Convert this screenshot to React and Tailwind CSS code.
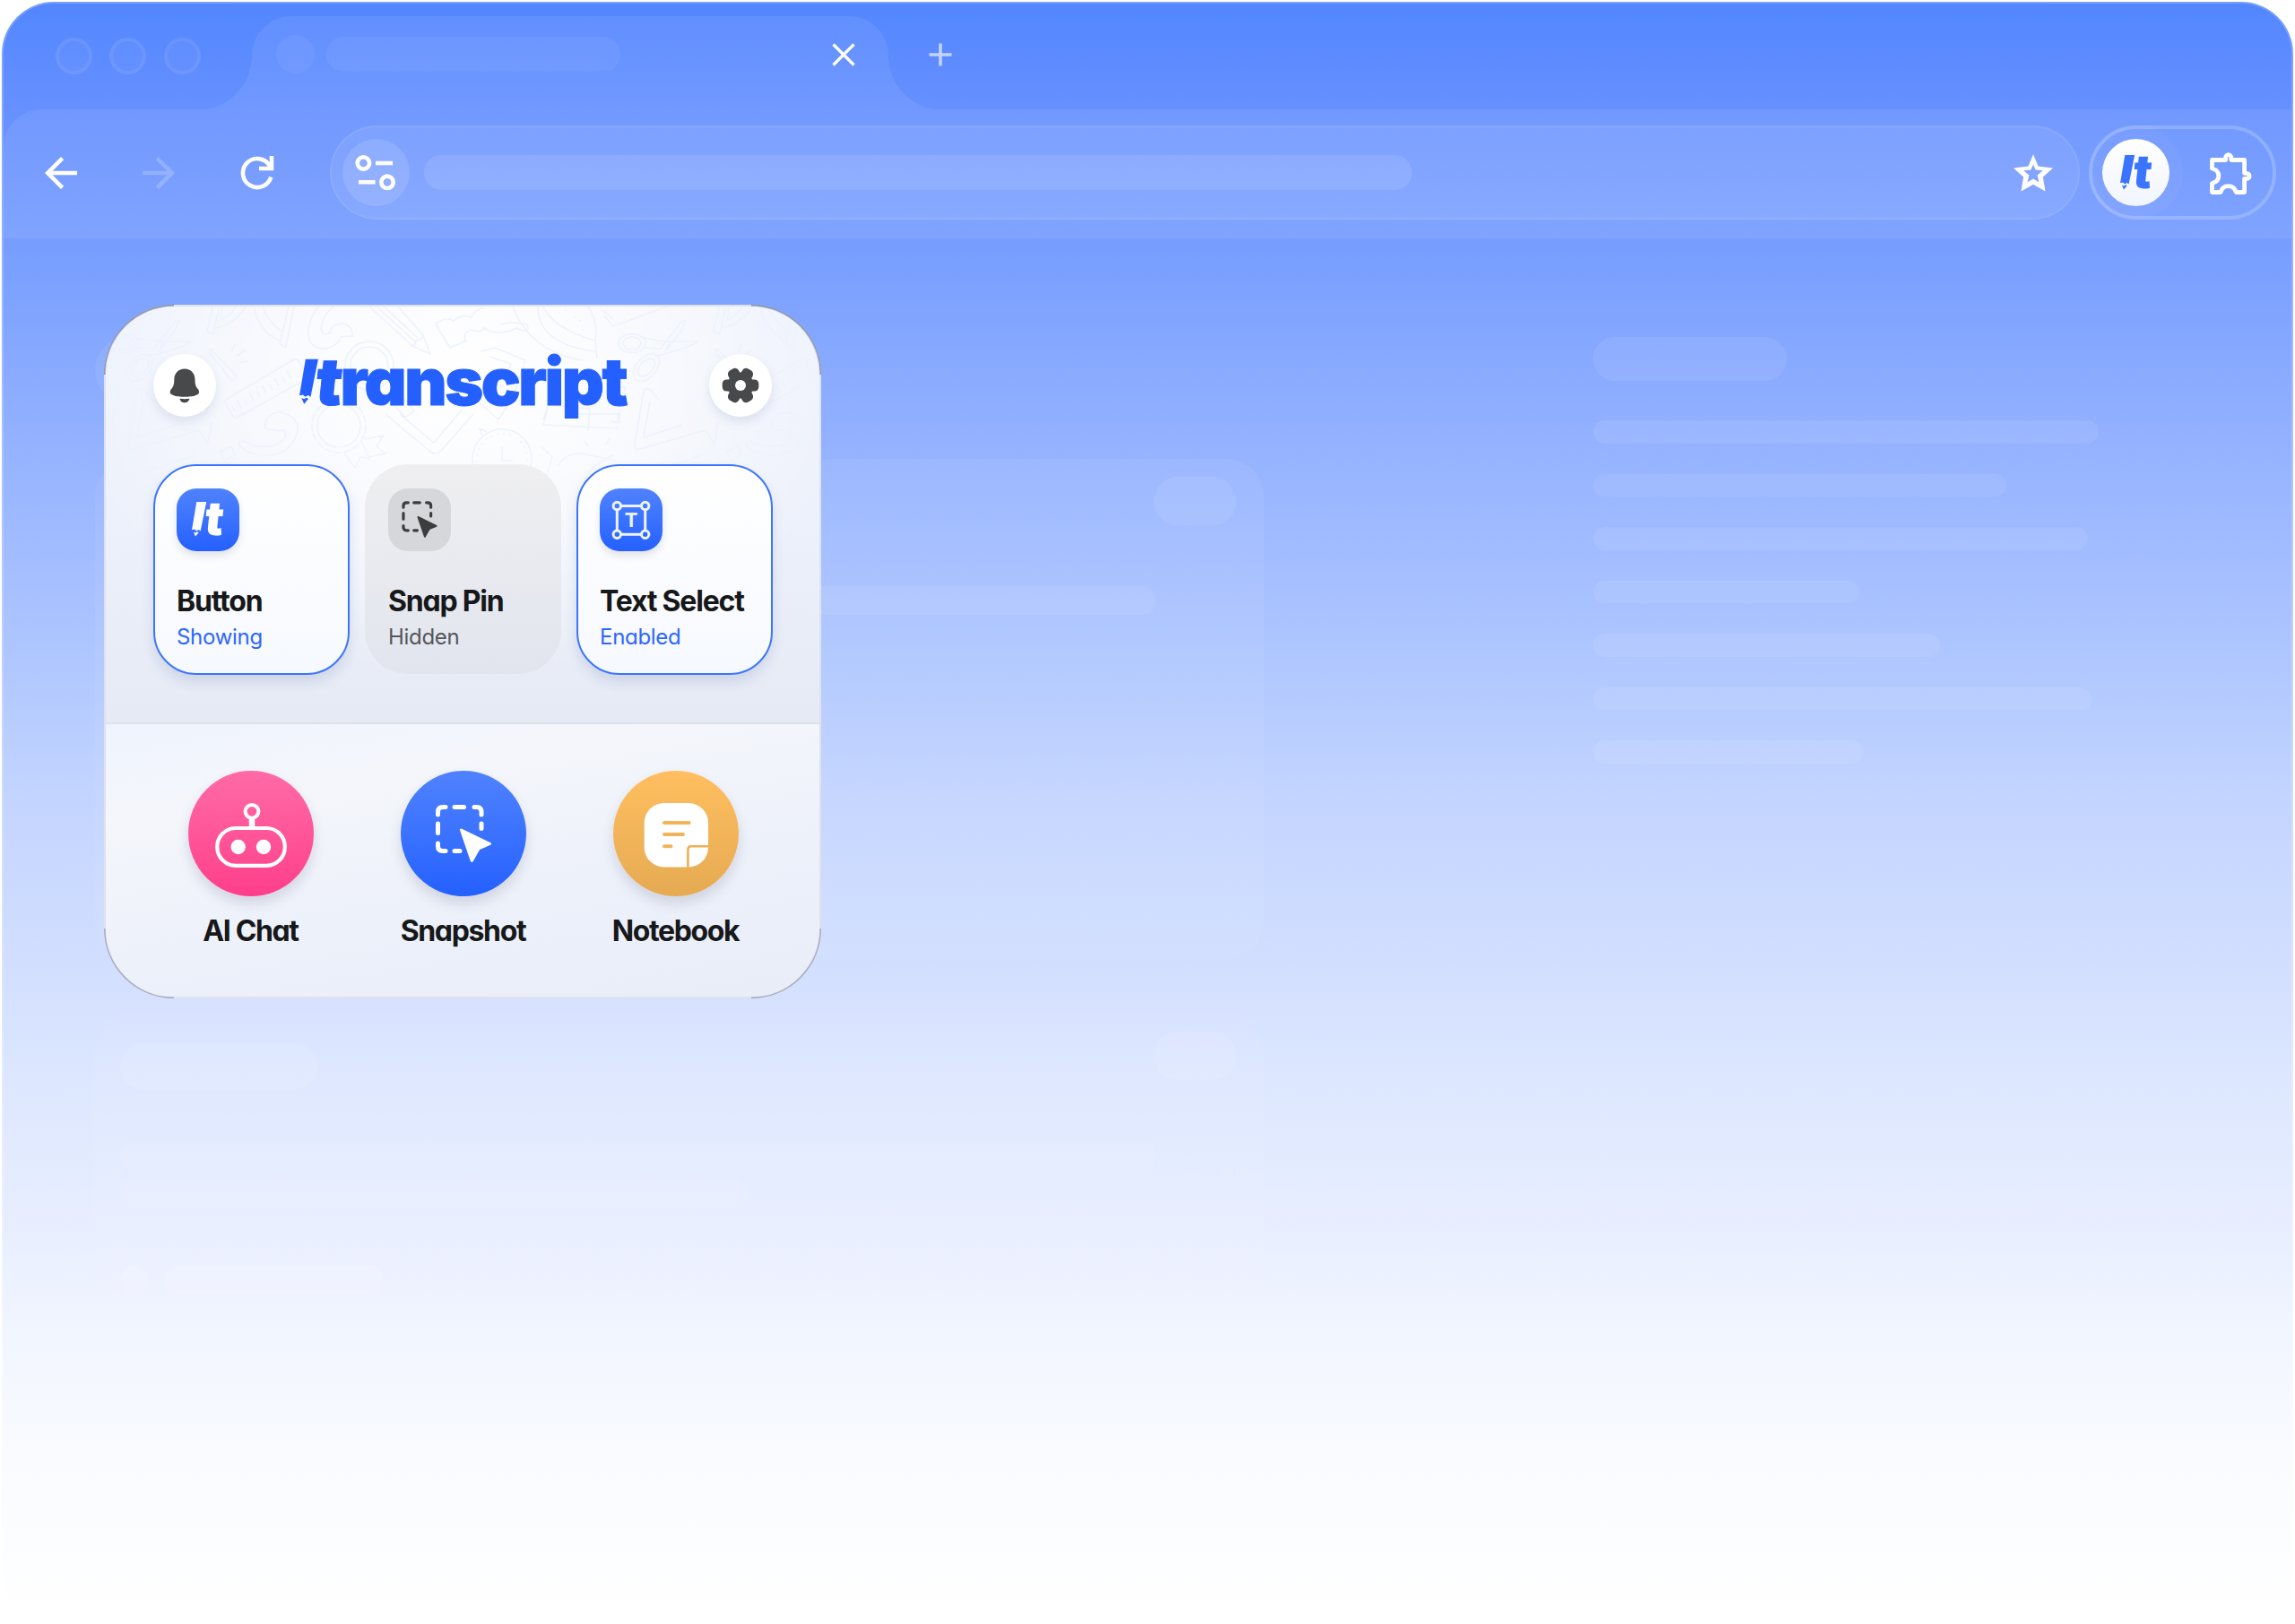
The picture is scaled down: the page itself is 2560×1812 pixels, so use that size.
import React from "react";
import { MdArrowBack, MdArrowForward } from "react-icons/md";

const ink = "font-['Inter','Liberation_Sans',sans-serif] [font-feature-settings:'cv11']";

function PencilSlash({ className }) {
  return (
    <svg viewBox="0 0 17 38.5" className={className} fill="currentColor">
      <path d="M5.3 0H16.2L9.6 32.6L7.6 31L5 32.4L3 30.6L0 31.3Z" />
      <path d="M1.8 33.4L4 34.4L6 33.2L7.8 34L4 38.5Z" />
    </svg>
  );
}

function BrandMark({ className = "" }) {
  return (
    <span className={`flex h-[38.5px] items-start ${className}`}>
      <PencilSlash className="h-[38.5px] w-[17px]" />
      <span className={`${ink} -ml-[2px] -mt-[6px] inline-block -skew-x-6 text-[52px] font-black leading-[50px]`}>t</span>
    </span>
  );
}

function SnapIcon({ className }) {
  return (
    <svg viewBox="484 898 66 68" className={className} fill="none" stroke="currentColor" strokeWidth="5" strokeLinecap="round">
      <path d="M488.5 911V908Q488.5 902.5 494 902.5H497M507 902.5H517.5M529 902.5H531.5Q537 902.5 537 908V911M488.5 921V931.5M488.5 943V946Q488.5 951.5 494 951.5H497M507 951.5H513M537 921V926.5" />
      <path d="M514.5 928L546.5 943.5L534 949L526.3 962.5Z" fill="currentColor" strokeWidth="3" strokeLinejoin="round" />
    </svg>
  );
}

function RobotIcon() {
  return (
    <svg viewBox="210 858 140 140" className="size-[140px] shrink-0" fill="none" stroke="white">
      <circle cx="281" cy="903.3" r="7.4" strokeWidth="4" />
      <path d="M281 911V921" strokeWidth="6.5" />
      <rect x="242.3" y="922" width="75.5" height="41.8" rx="20.5" strokeWidth="4.2" />
      <circle cx="265.7" cy="943" r="8.2" fill="white" stroke="none" />
      <circle cx="294" cy="943" r="8.2" fill="white" stroke="none" />
    </svg>
  );
}

function NoteIcon() {
  return (
    <svg viewBox="684 858 140 140" className="size-[140px] shrink-0" fill="none">
      <rect x="718.7" y="894" width="71.3" height="71.5" rx="22" fill="white" />
      <path d="M741 916H768.5M741 929H762M741 942.3H748.5" stroke="#f2b359" strokeWidth="4" strokeLinecap="round" />
      <path d="M790.5 942.3H771Q767.4 942.3 767.4 946V966" stroke="#eeb057" strokeWidth="2.6" />
    </svg>
  );
}

function TextSelectIcon() {
  return (
    <svg viewBox="669 544.5 70 70" className="size-[70px]" fill="none" stroke="#eef3ff" strokeWidth="3">
      <path d="M693 564H715M693 595.7H715M688.3 569V591M719.7 569V591" />
      <circle cx="688.3" cy="564" r="4.2" />
      <circle cx="719.7" cy="564" r="4.2" />
      <circle cx="688.3" cy="595.7" r="4.2" />
      <circle cx="719.7" cy="595.7" r="4.2" />
      <text x="704" y="587.8" textAnchor="middle" fontFamily="Inter" fontWeight="700" fontSize="22" fill="#eef3ff" stroke="none">T</text>
    </svg>
  );
}

function BellIcon() {
  return (
    <svg viewBox="170.5 395.5 70 70" className="size-[70px]" fill="#48494b">
      <path d="M205.4 412C212.5 412 217 417 217 424C217 430 218.3 432.5 220.5 434.8Q222.3 437 221.5 439C219.5 442.3 212.5 443.3 205.4 443.3S191.3 442.3 189.3 439Q188.5 437 190.3 434.8C192.5 432.5 193.8 430 193.8 424C193.8 417 198.3 412 205.4 412Z" />
      <path d="M199.8 445.3Q205.4 446.2 211 445.3Q209.6 449.8 205.4 449.8T199.8 445.3Z" />
    </svg>
  );
}

function GearIcon() {
  return (
    <svg viewBox="-35 -35 70 70" className="size-[70px]" fill="#48494b">
      <circle r="14.6" />
      <rect x="-20.3" y="-6.6" width="40.6" height="13.2" rx="4.8" />
      <rect x="-20.3" y="-6.6" width="40.6" height="13.2" rx="4.8" transform="rotate(60)" />
      <rect x="-20.3" y="-6.6" width="40.6" height="13.2" rx="4.8" transform="rotate(120)" />
      <circle r="6" fill="white" />
    </svg>
  );
}

function TuneIcon() {
  return (
    <svg viewBox="382 155 75 75" className="size-[75px]" fill="none" stroke="white" strokeWidth="4.6">
      <circle cx="405.4" cy="182" r="6.7" />
      <path d="M419 182H438M400 203.3H418.6" />
      <circle cx="432" cy="203.3" r="6.7" />
    </svg>
  );
}

function StarIcon({ className }) {
  return (
    <svg viewBox="0 0 46 46" className={className} fill="white" fillRule="evenodd">
      <path d="M23 2.3L28.6 15.6L45 17.6L33.9 27.4L36.5 43.6L23 35.8L9.5 43.6L12.1 27.4L1 17.6L17.4 15.6ZM23 13.6L20.4 19.6L12.3 20.3L18.4 25.6L16.6 33.2L23 29.5L29.4 33.2L27.6 25.6L33.7 20.3L25.6 19.6Z" />
    </svg>
  );
}

function PuzzleIcon() {
  return (
    <svg viewBox="2462 166 52 52" className="size-[52px]" fill="none" stroke="white" strokeWidth="4.8" strokeLinejoin="round">
      <path d="M2467.5 177.5H2482.6V174.8a3.1 3.1 0 0 1 6.2 0V177.5H2503.6V192.3H2506a3.1 3.1 0 0 1 0 6.2H2503.6V213.5H2494.2C2493 209 2490 206.6 2485.6 206.6S2478.2 209 2477 213.5H2467.5V203.5C2472 202.6 2474.8 199.6 2474.8 195.3S2472 188 2467.5 187Z" />
    </svg>
  );
}

function Doodles() {
  return (
    <svg viewBox="118 342 796 290" className="absolute left-0 top-0 h-[290px] w-[796px]" fill="none" stroke="#edf2fd" strokeWidth="1.6" strokeLinejoin="round">
      <defs>
        <linearGradient id="fadeDown" x1="0" y1="0" x2="0" y2="1">
          <stop offset="0.5" stopColor="white" />
          <stop offset="1" stopColor="black" />
        </linearGradient>
        <mask id="doodleMask" maskUnits="userSpaceOnUse" x="118" y="342" width="796" height="290">
          <rect x="118" y="342" width="796" height="290" fill="url(#fadeDown)" />
        </mask>
        <g id="doodleTile">
          <ellipse cx="140" cy="383" rx="15" ry="10.5" />
          <ellipse cx="140" cy="383" rx="10" ry="7" />
          <ellipse cx="156" cy="410" rx="18" ry="11" transform="rotate(-48 156 410)" />
          <ellipse cx="156" cy="410" rx="12" ry="7" transform="rotate(-48 156 410)" />
          <path d="M154 388L172 389L196 358L200 357L194 371L178 391M178 391L182 381L213 381Q207 387 165 398M150 376L168 380L182 381" />
          <path d="M237 342L231 370L238 373L244 344M240 366Q262 362 274 342M248 342L246 357Q258 352 263 342M283 343Q290 372 314 381M293 342Q300 362 316 370M322 342L312 384L319 387L328 342" />
          <path d="M345 362Q340 388 360 389Q376 388 380 376L393 375Q394 362 380 361Q370 362 368 371Q360 376 358 366Q360 352 372 342M345 362Q348 350 356 342" />
          <path d="M412 342L460 386L480 395L472 374L444 342M420 342L464 382M428 342L466 377M460 386Q464 384 464 380Q470 380 472 374" />
          <circle cx="412" cy="408" r="27" />
          <circle cx="412" cy="408" r="21" />
          <path d="M250 447L328 401Q332 400 334 404L342 418Q343 422 340 424L264 466Q261 467 259 463ZM262 459L259 453M269 455L264 446M276 451L273 445M283 447L278 438M290 443L287 437M297 439L292 430M304 435L301 429M311 431L306 422M318 427L315 421M325 423L320 414" />
          <path d="M235 389Q232 390 234 394L258 424Q262 424 264 420ZM233 394L247 410M258 392L262 384M264 397L274 390M267 404L276 403" />
          <path d="M153 436Q156 432 160 435L170 446M143 496Q142 503 149 501L222 480L232 496L236 470M153 436L143 496M160 448L153 488L196 474" />
          <path d="M246 504L258 498L262 508L250 514ZM268 498Q264 492 272 492Q290 502 308 496Q324 488 316 480Q308 482 296 478Q294 462 312 460Q334 464 332 482Q324 508 296 508Q278 508 268 498" />
          <circle cx="378" cy="475" r="24" />
          <circle cx="378" cy="475" r="30" strokeDasharray="9 2" />
          <path d="M384 506L396 522L402 510L412 512L404 494M406 490L428 486L420 498L430 506L412 510" />
          <path d="M430 462L480 504Q486 508 492 503L528 462M446 462L484 494L516 456M440 452L452 446L462 458L452 466Z" />
          <path d="M486 362Q496 352 506 358Q514 350 526 354Q528 346 540 343M486 362L502 388L520 380Q514 372 526 368Q536 372 540 366Q556 376 576 366Q592 374 588 362Q570 358 558 362" />
          <path d="M536 392L552 388L586 402L572 444L556 468L524 440M546 398L570 406L566 418L548 412M540 424L562 432" />
          <circle cx="560" cy="512" r="33" />
          <circle cx="560" cy="512" r="28" strokeDasharray="2 5" />
          <path d="M538 486L535 478L543 482M560 514V498M560 514H572" />
          <path d="M572 342Q590 392 650 402M600 342Q600 384 664 392M606 342Q616 366 664 380Q668 360 656 342M664 380L666 400M630 346h2M640 354h2M650 368h2M646 358h2" />
          <path d="M674 352L684 364L744 342M672 346L684 356" />
          <path d="M606 468L612 452L658 456L656 480M612 452L606 474L690 478M640 462H690L688 472" />
          <path d="M604 498L616 510L610 530M622 520Q636 500 658 508L688 514M650 540Q656 520 684 508M656 498L652 492M676 496L680 488" />
          <path d="M150 530L218 508M160 545L230 520M116 432H132V442M116 470L126 472V458" />
        </g>
      </defs>
      <g mask="url(#doodleMask)">
        <use href="#doodleTile" />
        <use href="#doodleTile" x="565" />
      </g>
    </svg>
  );
}

function ToggleCard({ icon, title, status, on }) {
  return (
    <div
      className={
        on
          ? "h-[235px] w-[219px] rounded-[48px] border-2 border-[#3b74ff] bg-linear-to-b from-white to-[#f6f9ff] pl-[24.5px] pt-[24.5px] shadow-[0_8px_14px_rgba(40,60,120,0.13)]"
          : "h-[234px] w-[219px] rounded-[48px] bg-linear-to-b from-[#efeff1] to-[#e2e5ee] pl-[26.5px] pt-[26.5px]"
      }
    >
      <div
        className={
          on
            ? "flex size-[70px] items-center justify-center rounded-[22px] bg-linear-to-b from-[#4f82ff] to-[#2460ff] text-white shadow-[0_5px_8px_rgba(40,40,60,0.12)]"
            : "flex size-[70px] items-center justify-center rounded-[22px] bg-[#d6d7da] text-[#3c3d3f]"
        }
      >
        {icon}
      </div>
      <div className={`${ink} mt-[36px] whitespace-nowrap text-[32px] font-bold leading-[40px] tracking-[-1.2px] text-[#17181a]`}>{title}</div>
      <div className={`${ink} mt-[4px] text-[24px] leading-[32px] tracking-[-0.3px] ${on ? "text-[#2d66ff]" : "text-[#55565a]"}`}>{status}</div>
    </div>
  );
}

function Action({ icon, label, tone }) {
  return (
    <div className="flex w-[219px] flex-col items-center">
      <div className={`flex size-[140px] items-center justify-center rounded-full text-white shadow-[0_8px_14px_rgba(60,60,100,0.16)] ${tone}`}>{icon}</div>
      <div className={`${ink} mt-[18.5px] whitespace-nowrap text-[32px] font-bold leading-[40px] tracking-[-1.35px] text-[#17181a]`}>{label}</div>
    </div>
  );
}

function Popup() {
  return (
    <div className="absolute left-[116px] top-[340px] h-[774px] w-[800px] overflow-hidden rounded-[78px] border-2 border-[#dfe2ec]">
      <section className="relative h-[466px] border-b-2 border-[#dde1ea] bg-[radial-gradient(ellipse_440px_330px_at_50%_18%,#ffffff_0%,rgba(255,255,255,0.75)_35%,rgba(255,255,255,0)_100%),linear-gradient(to_bottom,#eef2fc_0%,#edf1fb_50%,#e5eaf5_100%)]">
        <Doodles />
        <header className="relative flex h-[176px] items-start justify-between px-[52.5px] pt-[53px]">
          <div className="size-[70px] rounded-full bg-white shadow-[0_6px_12px_rgba(60,80,140,0.12)]">
            <BellIcon />
          </div>
          <h1 className="flex items-start text-[#2460ff]">
            <PencilSlash className="mt-[5px] h-[51.5px] w-[22px]" />
            <span className={`${ink} -ml-[3px] -mt-[13.5px] whitespace-nowrap text-[73px] font-black leading-[88px] tracking-[-2.4px] [-webkit-text-stroke:1px_#2460ff]`}>
              <span className="inline-block -skew-x-6">t</span>ranscript
            </span>
          </h1>
          <div className="size-[70px] rounded-full bg-white shadow-[0_6px_12px_rgba(60,80,140,0.12)]">
            <GearIcon />
          </div>
        </header>
        <div className="relative flex items-start gap-[17px] pl-[52.5px]">
          <ToggleCard on title="Button" status="Showing" icon={<BrandMark />} />
          <ToggleCard title="Snap Pin" status="Hidden" icon={<SnapIcon className="h-[43px] w-[42px]" />} />
          <ToggleCard on title="Text Select" status="Enabled" icon={<TextSelectIcon />} />
        </div>
      </section>
      <section className="flex h-[304px] items-start gap-[18px] bg-[linear-gradient(170deg,#eff4fe_0%,#f4f6fb_25%,#edf1fa_60%,#e9edf8_100%)] pl-[52px] pt-[52px]">
        <Action label="AI Chat" tone="bg-linear-to-b from-[#ff6aa6] to-[#ff3d8b]" icon={<RobotIcon />} />
        <Action label="Snapshot" tone="bg-linear-to-b from-[#5082ff] to-[#2460ff]" icon={<SnapIcon className="h-[68px] w-[66px]" />} />
        <Action label="Notebook" tone="bg-linear-to-b from-[#ffbf60] to-[#e5aa52]" icon={<NoteIcon />} />
      </section>
    </div>
  );
}

function PopupCorners() {
  return (
    <svg viewBox="0 0 800 774" className="absolute left-[116px] top-[340px] h-[774px] w-[800px]" fill="none" strokeWidth="1.4">
      <path d="M0.7 78A77.3 77.3 0 0 1 78 0.7M722 0.7A77.3 77.3 0 0 1 799.3 78" stroke="rgba(50,50,60,0.45)" />
      <path d="M0.7 696A77.3 77.3 0 0 0 78 773.3M722 773.3A77.3 77.3 0 0 0 799.3 696" stroke="rgba(50,50,60,0.32)" />
    </svg>
  );
}

function TabStrip() {
  return (
    <div className="flex h-[118px] items-end">
      <div className="flex h-full items-center gap-[19.5px] pb-px pl-[57.5px]">
        <span className="size-[41px] rounded-full border-4 border-white/6 bg-white/4" />
        <span className="size-[41px] rounded-full border-4 border-white/6 bg-white/4" />
        <span className="size-[41px] rounded-full border-4 border-white/6 bg-white/4" />
      </div>
      <svg viewBox="0 0 57 60" className="h-[60px] w-[57px] text-white/7" fill="currentColor">
        <path d="M57 0C57 33 30 60 0 60H57Z" />
      </svg>
      <div className="flex h-[104px] w-[710px] items-start rounded-t-[44px] bg-white/7 pl-[27px] pt-[21px]">
        <span className="size-[43px] rounded-full bg-white/5" />
        <span className="ml-[13px] mt-[2px] h-[39px] w-[328px] rounded-full bg-white/5" />
        <svg viewBox="0 0 26 26" className="ml-[236px] mt-[9px] size-[26px]" stroke="white" strokeWidth="3.2">
          <path d="M1.5 1.5L24.5 24.5M24.5 1.5L1.5 24.5" />
        </svg>
      </div>
      <svg viewBox="0 0 57 60" className="h-[60px] w-[57px] text-white/7" fill="currentColor">
        <path d="M0 0C0 33 27 60 57 60H0Z" />
      </svg>
      <svg viewBox="0 0 26 26" className="mb-[48px] -ml-[12px] size-[26px]" stroke="#c3d3ff" strokeWidth="3.6">
        <path d="M13 0.5V25.5M0.5 13H25.5" />
      </svg>
    </div>
  );
}

function Toolbar() {
  return (
    <div className="flex h-[144px] items-center rounded-tl-[42px] bg-white/7 pb-[3px] text-white">
      <MdArrowBack className="ml-[37px] size-[54px]" />
      <MdArrowForward className="ml-[55px] size-[54px] opacity-20" />
      <svg viewBox="268 173 38 40" className="ml-[64px] h-[40px] w-[38px]" fill="none" stroke="white" strokeWidth="4.6">
        <path d="M302.3 197.5A16 16 0 1 1 300.5 184.5L303 188" />
        <path d="M303 174V188H289" />
      </svg>
      <div className="ml-[62px] flex h-[105px] w-[1952px] shrink-0 items-center rounded-full border-2 border-white/7 bg-white/8 pl-[12px]">
        <span className="size-[75px] rounded-full bg-white/12">
          <TuneIcon />
        </span>
        <span className="ml-[16px] h-[39px] w-[1102px] rounded-full bg-white/10" />
        <StarIcon className="ml-auto mr-[27px] size-[46px]" />
      </div>
      <div className="ml-[10px] flex h-[105px] w-[209px] shrink-0 items-center rounded-full border-4 border-white/20">
        <span className="-ml-[4px] flex size-[105px] items-center justify-center rounded-full bg-white/4">
          <span className="flex size-[75px] items-center justify-center rounded-full bg-linear-to-b from-white to-[#f1f5ff] text-[#3b74ff]">
            <BrandMark />
          </span>
        </span>
        <span className="ml-[27px]">
          <PuzzleIcon />
        </span>
      </div>
    </div>
  );
}

function GhostCard({ className, children }) {
  return (
    <div className={`w-[1304px] px-[28px] pr-[31px] ${className}`}>
      <div className="flex items-start justify-between pt-[20px]">
        <span className="mt-[12px] h-[53px] w-[220px] rounded-full bg-white/7" />
        <span className="h-[54px] w-[92px] rounded-full bg-white/7" />
      </div>
      <div className="mt-[57px] h-[32px] w-[1155px] rounded-full bg-white/7" />
      <div className="mt-[11px] h-[32px] w-[700px] rounded-full bg-white/7" />
      {children}
    </div>
  );
}

const lines = ["w-[564px]", "w-[461px]", "w-[552px]", "w-[297px]", "w-[387px]", "w-[556px]", "w-[301px]"];

export default function App() {
  return (
    <div className="relative h-[1812px] w-[2560px] overflow-hidden bg-white px-[2px] pt-[2px]">
      <div className="h-[1810px] overflow-hidden rounded-t-[58px] border-x-2 border-t-2 border-white/20 bg-[linear-gradient(to_bottom,#5286ff_0px,#6690ff_118px,#769dff_266px,#80a4ff_346px,#92b0ff_476px,#b2c9ff_756px,#c3d4ff_886px,#d1deff_1066px,#dde7ff_1206px,#e8eeff_1366px,#f2f6ff_1496px,#f9fbff_1626px,#ffffff_1800px)] bg-origin-border">
        <TabStrip />
        <Toolbar />
        <main className="flex items-start pl-[102px] pt-[110px]">
          <div>
            <div className="size-[74px] rounded-full bg-white/8" />
            <GhostCard className="mt-[62px] h-[558px] rounded-[42px] bg-white/6" />
            <GhostCard className="mt-[61px] h-[620px] rounded-[42px] bg-white/6">
              <div className="mt-[64px] flex gap-[17px]">
                <span className="size-[32px] rounded-full bg-white/12" />
                <span className="h-[32px] w-[244px] rounded-full bg-white/12" />
              </div>
            </GhostCard>
          </div>
          <div className="ml-[367px]">
            <div className="h-[49px] w-[216px] rounded-full bg-white/8" />
            <div className="mt-[44px] flex flex-col gap-[34px]">
              {lines.map((w, i) => (
                <div key={i} className={`h-[25.5px] rounded-full bg-white/8 ${w}`} />
              ))}
            </div>
          </div>
        </main>
      </div>
      <Popup />
      <PopupCorners />
    </div>
  );
}
